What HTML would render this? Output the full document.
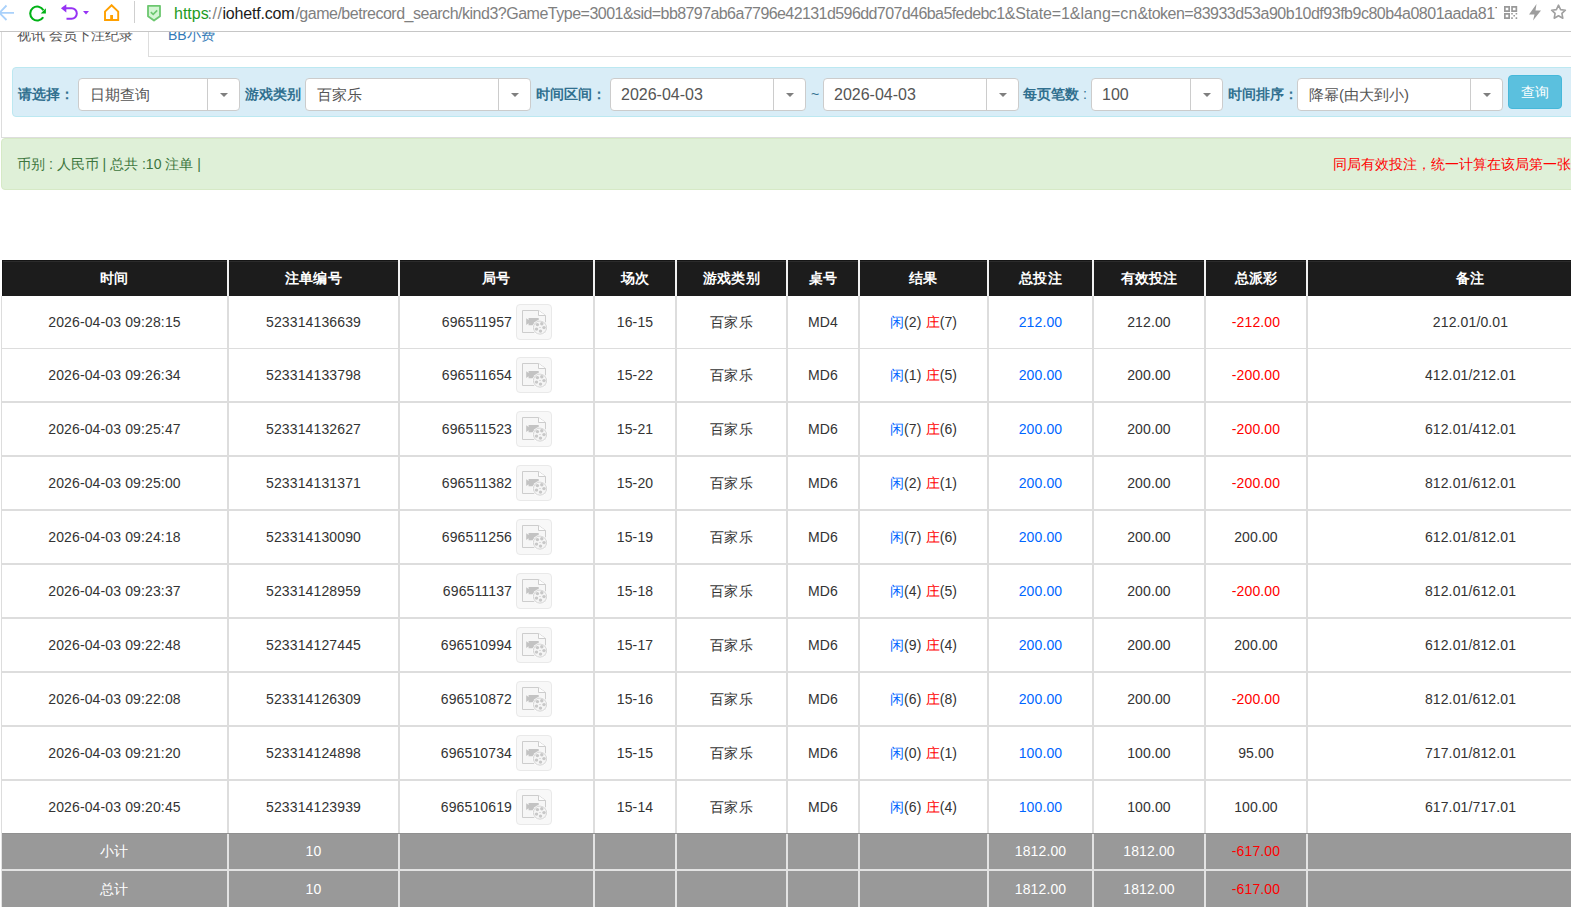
<!DOCTYPE html>
<html><head><meta charset="utf-8">
<style>
*{box-sizing:border-box;margin:0;padding:0}
html,body{width:1571px;height:907px;overflow:hidden;background:#fff;font-family:"Liberation Sans",sans-serif;color:#333}
.abs{position:absolute}
#tb{position:absolute;left:0;top:0;width:1571px;height:32px;background:#fff;border-bottom:1px solid #c6c6c6;z-index:5}
#url{position:absolute;left:174px;top:4px;height:22px;font-size:16px;line-height:20px;white-space:nowrap;color:#7f7f7f;width:1323px;overflow:hidden}
#url span{position:absolute;top:0}
.lbl{position:absolute;top:86px;font-size:14px;line-height:16px;font-weight:bold;color:#31708f;white-space:nowrap}
.sel{position:absolute;top:78px;height:33px;background:#fff;border:1px solid #ccc;border-radius:4px}
.sel .v{position:absolute;left:10px;top:6px;font-size:16px;line-height:19px;color:#555;white-space:nowrap}
.sel .v.cj{font-size:15px;left:11px}
.sel .sep{position:absolute;right:31px;top:0;bottom:0;border-left:1px solid #ccc}
.sel .car{position:absolute;right:11px;top:14px;width:0;height:0;border-left:4px solid transparent;border-right:4px solid transparent;border-top:4px solid #7f7f7f}
.c{position:absolute;text-align:center;font-size:14px;line-height:16px;white-space:nowrap;color:#333;letter-spacing:0.13px}
.th{color:#fff;font-weight:bold}
.tw{color:#fff}
.bl{color:#0066ff}
.rd{color:#ff0000}
.vl{position:absolute;width:2px;background:#ddd}
.hl{position:absolute;left:1px;width:1570px;background:#ddd}
.vidw{width:40px;height:40px}
.vidw svg{display:block}
</style></head><body>
<div id="tb">
 <!-- back -->
 <svg class="abs" style="left:0;top:4px" width="16" height="18" viewBox="0 0 16 18"><path d="M6.5 1.5L-0.6 8.8L6.5 16M-0.6 8.8H14" fill="none" stroke="#a9d1fb" stroke-width="1.8"/></svg>
 <!-- reload -->
 <svg class="abs" style="left:28px;top:5px" width="20" height="18" viewBox="0 0 20 18"><path d="M15.2 12.2A7 7 0 1 1 15.4 5.2" fill="none" stroke="#00b215" stroke-width="2.1"/><path d="M17.9 3.3V8.5H12.7z" fill="#00b215"/></svg>
 <!-- undo -->
 <svg class="abs" style="left:60px;top:3px" width="18" height="18" viewBox="0 0 18 18"><path d="M5.5 5.3H11.6A5.2 5.2 0 0 1 11.6 15.7H6.5" fill="none" stroke="#9632f4" stroke-width="2"/><path d="M0.9 5.3L6.3 1.2V9.6z" fill="#9632f4"/></svg>
 <svg class="abs" style="left:83px;top:11px" width="6" height="4" viewBox="0 0 6 4"><path d="M0 0H6L3 3.5z" fill="#9632f4"/></svg>
 <!-- home -->
 <svg class="abs" style="left:104px;top:4px" width="16" height="18" viewBox="0 0 16 18"><path d="M1 16V7.6L7.6 1.2L14.2 7.6V16H1z" fill="none" stroke="#ffa000" stroke-width="1.9"/><rect x="6.2" y="11" width="2.8" height="5" fill="#ffa000"/></svg>
 <div class="abs" style="left:134px;top:1px;width:1px;height:22px;background:#cfcfcf"></div>
 <!-- shield -->
 <svg class="abs" style="left:146px;top:4px" width="16" height="18" viewBox="0 0 16 18"><path d="M2 1.8H14V12.2L8 16.6L2 12.2z" fill="#d4f5d4" stroke="#6cc76f" stroke-width="1.8" stroke-linejoin="round"/><path d="M4.8 8.2L7.2 10.4L11.2 6.4" fill="none" stroke="#6cc76f" stroke-width="1.6"/></svg>
 <!-- qr -->
 <svg class="abs" style="left:1504px;top:6px" width="14" height="13" viewBox="0 0 14 13"><path d="M0 0h6v6H0zM1.7 1.7v2.6h2.6V1.7zM7.2 0h6v6h-6zM8.9 1.7v2.6h2.6V1.7zM0 7h6v6H0zM1.7 8.7v2.6h2.6V8.7z" fill="#999" fill-rule="evenodd"/><path d="M7.2 7h1.6v1.6H7.2zM11.6 7h1.6v1.6h-1.6zM9.4 9h1.6v1.6H9.4zM7.2 11.2h1.6V13H7.2zM11.6 11.2h1.6V13h-1.6z" fill="#999"/></svg>
 <!-- lightning -->
 <svg class="abs" style="left:1529px;top:4px" width="13" height="17" viewBox="0 0 13 17"><path d="M7.5 0L0 10.6H5.5L4 16.5L12 6.6H6.5z" fill="#9d9d9d"/></svg>
 <!-- star -->
 <svg class="abs" style="left:1550px;top:4px" width="17" height="16" viewBox="0 0 17 16"><path d="M8.5 1.2L10.6 5.6L15.4 6.2L11.9 9.4L12.8 14.2L8.5 11.8L4.2 14.2L5.1 9.4L1.6 6.2L6.4 5.6z" fill="none" stroke="#a0a0a0" stroke-width="1.6" stroke-linejoin="round"/></svg>
 <div id="url"><span style="left:0;color:#1e9b1e">https</span><span style="left:33.5px;letter-spacing:0.5px">://</span><span style="left:48.5px;color:#1a1a1a;letter-spacing:-0.2px">iohetf.com</span><span style="left:121.4px;letter-spacing:-0.49px">/game/betrecord_search/kind3?GameType=3001</span><span style="left:449px;letter-spacing:-0.58px">&amp;sid=bb8797ab6a7796e42131d596dd707d46ba5fedebc1</span><span style="left:830.8px;letter-spacing:-0.17px">&amp;State=1</span><span style="left:895.7px;letter-spacing:0.07px">&amp;lang=cn</span><span style="left:963.5px;letter-spacing:-0.49px">&amp;token=83933d53a90b10df93fb9c80b4a0801aada817</span></div>
</div>

<!-- tabs -->
<div class="abs" style="left:17px;top:27px;font-size:14px;line-height:16px;color:#555;white-space:nowrap">视讯 会员下注纪录</div>
<div class="abs" style="left:148px;top:20px;width:1430px;height:37px;border:1px solid #ddd;border-top:none"></div>
<div class="abs" style="left:168px;top:27px;font-size:14px;line-height:16px;color:#337ab7;white-space:nowrap">BB小费</div>
<div class="abs" style="left:1px;top:20px;width:1600px;height:118px;border:1px solid #ddd;border-top:none;border-right:none"></div>

<!-- filter bar -->
<div class="abs" style="left:12px;top:67px;width:1580px;height:50px;background:#d9edf7;border:1px solid #bce8f1;border-radius:4px"></div>
<div class="lbl" style="left:18px">请选择：</div>
<div class="sel" style="left:78px;width:162px"><div class="v cj">日期查询</div><div class="sep"></div><div class="car"></div></div>
<div class="lbl" style="left:245px">游戏类别</div>
<div class="sel" style="left:305px;width:226px"><div class="v cj">百家乐</div><div class="sep"></div><div class="car"></div></div>
<div class="lbl" style="left:536px">时间区间：</div>
<div class="sel" style="left:610px;width:196px"><div class="v">2026-04-03</div><div class="sep"></div><div class="car"></div></div>
<div class="abs" style="left:811px;top:86px;font-size:14px;line-height:16px;color:#31708f">~</div>
<div class="sel" style="left:823px;width:196px"><div class="v">2026-04-03</div><div class="sep"></div><div class="car"></div></div>
<div class="lbl" style="left:1023px">每页笔数<span style="font-weight:normal"> :</span></div>
<div class="sel" style="left:1091px;width:132px"><div class="v">100</div><div class="sep"></div><div class="car"></div></div>
<div class="lbl" style="left:1228px">时间排序：</div>
<div class="sel" style="left:1297px;width:206px"><div class="v cj">降幂(由大到小)</div><div class="sep"></div><div class="car"></div></div>
<div class="abs" style="left:1508px;top:75px;width:54px;height:34px;background:#5bc0de;border:1px solid #46b8da;border-radius:4px;color:#fff;font-size:14px;line-height:16px;text-align:center;padding-top:8px">查询</div>

<!-- alert -->
<div class="abs" style="left:1px;top:138px;width:1600px;height:52px;background:#dff0d8;border:1px solid #d6e9c6;border-radius:4px"></div>
<div class="abs" style="left:17px;top:156px;font-size:14px;line-height:16px;color:#3c763d;white-space:nowrap">币别 : 人民币 | 总共 :10 注单 |</div>
<div class="abs" style="left:1333px;top:156px;font-size:14px;line-height:16px;color:#ff0000;white-space:nowrap">同局有效投注，统一计算在该局第一张牌</div>
<div class="abs" style="left:2px;top:260px;width:1569px;height:36px;background:#1c1c1c;border-top:1px solid #151515;border-left:1px solid #151515"></div>
<div class="abs" style="left:3px;top:261px;width:1568px;height:1px;background:#2b2b2b"></div>
<div class="c th" style="left:2px;width:225px;top:270px">时间</div>
<div class="c th" style="left:229px;width:169px;top:270px">注单编号</div>
<div class="c th" style="left:400px;width:193px;top:270px">局号</div>
<div class="c th" style="left:595px;width:80px;top:270px">场次</div>
<div class="c th" style="left:677px;width:109px;top:270px">游戏类别</div>
<div class="c th" style="left:788px;width:70px;top:270px">桌号</div>
<div class="c th" style="left:860px;width:127px;top:270px">结果</div>
<div class="c th" style="left:989px;width:103px;top:270px">总投注</div>
<div class="c th" style="left:1094px;width:110px;top:270px">有效投注</div>
<div class="c th" style="left:1206px;width:100px;top:270px">总派彩</div>
<div class="c th" style="left:1308px;width:325px;top:270px">备注</div>
<div class="vl" style="left:227px;top:260px;height:36px;background:#f0f0f0"></div>
<div class="vl" style="left:398px;top:260px;height:36px;background:#f0f0f0"></div>
<div class="vl" style="left:593px;top:260px;height:36px;background:#f0f0f0"></div>
<div class="vl" style="left:675px;top:260px;height:36px;background:#f0f0f0"></div>
<div class="vl" style="left:786px;top:260px;height:36px;background:#f0f0f0"></div>
<div class="vl" style="left:858px;top:260px;height:36px;background:#f0f0f0"></div>
<div class="vl" style="left:987px;top:260px;height:36px;background:#f0f0f0"></div>
<div class="vl" style="left:1092px;top:260px;height:36px;background:#f0f0f0"></div>
<div class="vl" style="left:1204px;top:260px;height:36px;background:#f0f0f0"></div>
<div class="vl" style="left:1306px;top:260px;height:36px;background:#f0f0f0"></div>
<div class="abs" style="left:1px;top:296px;width:1px;height:537px;background:#ddd"></div>
<div class="vl" style="left:227px;top:296px;height:537px"></div>
<div class="vl" style="left:398px;top:296px;height:537px"></div>
<div class="vl" style="left:593px;top:296px;height:537px"></div>
<div class="vl" style="left:675px;top:296px;height:537px"></div>
<div class="vl" style="left:786px;top:296px;height:537px"></div>
<div class="vl" style="left:858px;top:296px;height:537px"></div>
<div class="vl" style="left:987px;top:296px;height:537px"></div>
<div class="vl" style="left:1092px;top:296px;height:537px"></div>
<div class="vl" style="left:1204px;top:296px;height:537px"></div>
<div class="vl" style="left:1306px;top:296px;height:537px"></div>
<div class="hl" style="top:348px;height:1px"></div>
<div class="hl" style="top:401px;height:2px"></div>
<div class="hl" style="top:455px;height:2px"></div>
<div class="hl" style="top:509px;height:2px"></div>
<div class="hl" style="top:563px;height:2px"></div>
<div class="hl" style="top:617px;height:2px"></div>
<div class="hl" style="top:671px;height:2px"></div>
<div class="hl" style="top:725px;height:2px"></div>
<div class="hl" style="top:779px;height:2px"></div>
<div class="c" style="left:2px;width:225px;top:314px">2026-04-03 09:28:15</div>
<div class="c" style="left:229px;width:169px;top:314px">523314136639</div>
<div class="c" style="left:400px;width:112px;top:314px;text-align:right">696511957</div>
<div class="abs vidw" style="left:514px;top:302px"><svg width="40" height="40" viewBox="0 0 40 40"><rect x="2.5" y="2.5" width="35" height="35" rx="3.5" fill="#f8f8f8" stroke="#e9e9e9"/><path d="M8.5 8.5H24.5L31.5 13.5V30.5H8.5z" fill="#f6f6f6" stroke="#cdcdcd"/><path d="M24.5 8.5V13.5H31.5" fill="#fdfdfd" stroke="#cdcdcd"/><path d="M12.2 16.2L14.6 18V15.9H24.7V23.2H14.6V21.2L12.2 23z" fill="#c3c3c3"/><circle cx="26" cy="25.6" r="7.6" fill="#fff"/><circle cx="26" cy="25.6" r="6.6" fill="#f5f5f5" stroke="#cfcfcf" stroke-width="0.9"/><circle cx="23.4" cy="22.6" r="1.7" fill="#c8c8c8"/><circle cx="27.8" cy="21.7" r="1.7" fill="#c8c8c8"/><circle cx="30" cy="25.6" r="1.7" fill="#c8c8c8"/><circle cx="26.5" cy="29.1" r="1.7" fill="#c8c8c8"/><circle cx="22.5" cy="27.1" r="1.7" fill="#c8c8c8"/><rect x="25.3" y="25" width="1.4" height="0.9" fill="#cfcfcf"/></svg></div>
<div class="c" style="left:595px;width:80px;top:314px">16-15</div>
<div class="c" style="left:677px;width:109px;top:314px">百家乐</div>
<div class="c" style="left:788px;width:70px;top:314px">MD4</div>
<div class="c" style="left:860px;width:127px;top:314px"><span class="bl">闲</span>(2) <span class="rd">庄</span>(7)</div>
<div class="c" style="left:989px;width:103px;top:314px"><span class="bl">212.00</span></div>
<div class="c" style="left:1094px;width:110px;top:314px">212.00</div>
<div class="c" style="left:1206px;width:100px;top:314px"><span class="rd">-212.00</span></div>
<div class="c" style="left:1308px;width:325px;top:314px">212.01/0.01</div>
<div class="c" style="left:2px;width:225px;top:367px">2026-04-03 09:26:34</div>
<div class="c" style="left:229px;width:169px;top:367px">523314133798</div>
<div class="c" style="left:400px;width:112px;top:367px;text-align:right">696511654</div>
<div class="abs vidw" style="left:514px;top:355px"><svg width="40" height="40" viewBox="0 0 40 40"><rect x="2.5" y="2.5" width="35" height="35" rx="3.5" fill="#f8f8f8" stroke="#e9e9e9"/><path d="M8.5 8.5H24.5L31.5 13.5V30.5H8.5z" fill="#f6f6f6" stroke="#cdcdcd"/><path d="M24.5 8.5V13.5H31.5" fill="#fdfdfd" stroke="#cdcdcd"/><path d="M12.2 16.2L14.6 18V15.9H24.7V23.2H14.6V21.2L12.2 23z" fill="#c3c3c3"/><circle cx="26" cy="25.6" r="7.6" fill="#fff"/><circle cx="26" cy="25.6" r="6.6" fill="#f5f5f5" stroke="#cfcfcf" stroke-width="0.9"/><circle cx="23.4" cy="22.6" r="1.7" fill="#c8c8c8"/><circle cx="27.8" cy="21.7" r="1.7" fill="#c8c8c8"/><circle cx="30" cy="25.6" r="1.7" fill="#c8c8c8"/><circle cx="26.5" cy="29.1" r="1.7" fill="#c8c8c8"/><circle cx="22.5" cy="27.1" r="1.7" fill="#c8c8c8"/><rect x="25.3" y="25" width="1.4" height="0.9" fill="#cfcfcf"/></svg></div>
<div class="c" style="left:595px;width:80px;top:367px">15-22</div>
<div class="c" style="left:677px;width:109px;top:367px">百家乐</div>
<div class="c" style="left:788px;width:70px;top:367px">MD6</div>
<div class="c" style="left:860px;width:127px;top:367px"><span class="bl">闲</span>(1) <span class="rd">庄</span>(5)</div>
<div class="c" style="left:989px;width:103px;top:367px"><span class="bl">200.00</span></div>
<div class="c" style="left:1094px;width:110px;top:367px">200.00</div>
<div class="c" style="left:1206px;width:100px;top:367px"><span class="rd">-200.00</span></div>
<div class="c" style="left:1308px;width:325px;top:367px">412.01/212.01</div>
<div class="c" style="left:2px;width:225px;top:421px">2026-04-03 09:25:47</div>
<div class="c" style="left:229px;width:169px;top:421px">523314132627</div>
<div class="c" style="left:400px;width:112px;top:421px;text-align:right">696511523</div>
<div class="abs vidw" style="left:514px;top:409px"><svg width="40" height="40" viewBox="0 0 40 40"><rect x="2.5" y="2.5" width="35" height="35" rx="3.5" fill="#f8f8f8" stroke="#e9e9e9"/><path d="M8.5 8.5H24.5L31.5 13.5V30.5H8.5z" fill="#f6f6f6" stroke="#cdcdcd"/><path d="M24.5 8.5V13.5H31.5" fill="#fdfdfd" stroke="#cdcdcd"/><path d="M12.2 16.2L14.6 18V15.9H24.7V23.2H14.6V21.2L12.2 23z" fill="#c3c3c3"/><circle cx="26" cy="25.6" r="7.6" fill="#fff"/><circle cx="26" cy="25.6" r="6.6" fill="#f5f5f5" stroke="#cfcfcf" stroke-width="0.9"/><circle cx="23.4" cy="22.6" r="1.7" fill="#c8c8c8"/><circle cx="27.8" cy="21.7" r="1.7" fill="#c8c8c8"/><circle cx="30" cy="25.6" r="1.7" fill="#c8c8c8"/><circle cx="26.5" cy="29.1" r="1.7" fill="#c8c8c8"/><circle cx="22.5" cy="27.1" r="1.7" fill="#c8c8c8"/><rect x="25.3" y="25" width="1.4" height="0.9" fill="#cfcfcf"/></svg></div>
<div class="c" style="left:595px;width:80px;top:421px">15-21</div>
<div class="c" style="left:677px;width:109px;top:421px">百家乐</div>
<div class="c" style="left:788px;width:70px;top:421px">MD6</div>
<div class="c" style="left:860px;width:127px;top:421px"><span class="bl">闲</span>(7) <span class="rd">庄</span>(6)</div>
<div class="c" style="left:989px;width:103px;top:421px"><span class="bl">200.00</span></div>
<div class="c" style="left:1094px;width:110px;top:421px">200.00</div>
<div class="c" style="left:1206px;width:100px;top:421px"><span class="rd">-200.00</span></div>
<div class="c" style="left:1308px;width:325px;top:421px">612.01/412.01</div>
<div class="c" style="left:2px;width:225px;top:475px">2026-04-03 09:25:00</div>
<div class="c" style="left:229px;width:169px;top:475px">523314131371</div>
<div class="c" style="left:400px;width:112px;top:475px;text-align:right">696511382</div>
<div class="abs vidw" style="left:514px;top:463px"><svg width="40" height="40" viewBox="0 0 40 40"><rect x="2.5" y="2.5" width="35" height="35" rx="3.5" fill="#f8f8f8" stroke="#e9e9e9"/><path d="M8.5 8.5H24.5L31.5 13.5V30.5H8.5z" fill="#f6f6f6" stroke="#cdcdcd"/><path d="M24.5 8.5V13.5H31.5" fill="#fdfdfd" stroke="#cdcdcd"/><path d="M12.2 16.2L14.6 18V15.9H24.7V23.2H14.6V21.2L12.2 23z" fill="#c3c3c3"/><circle cx="26" cy="25.6" r="7.6" fill="#fff"/><circle cx="26" cy="25.6" r="6.6" fill="#f5f5f5" stroke="#cfcfcf" stroke-width="0.9"/><circle cx="23.4" cy="22.6" r="1.7" fill="#c8c8c8"/><circle cx="27.8" cy="21.7" r="1.7" fill="#c8c8c8"/><circle cx="30" cy="25.6" r="1.7" fill="#c8c8c8"/><circle cx="26.5" cy="29.1" r="1.7" fill="#c8c8c8"/><circle cx="22.5" cy="27.1" r="1.7" fill="#c8c8c8"/><rect x="25.3" y="25" width="1.4" height="0.9" fill="#cfcfcf"/></svg></div>
<div class="c" style="left:595px;width:80px;top:475px">15-20</div>
<div class="c" style="left:677px;width:109px;top:475px">百家乐</div>
<div class="c" style="left:788px;width:70px;top:475px">MD6</div>
<div class="c" style="left:860px;width:127px;top:475px"><span class="bl">闲</span>(2) <span class="rd">庄</span>(1)</div>
<div class="c" style="left:989px;width:103px;top:475px"><span class="bl">200.00</span></div>
<div class="c" style="left:1094px;width:110px;top:475px">200.00</div>
<div class="c" style="left:1206px;width:100px;top:475px"><span class="rd">-200.00</span></div>
<div class="c" style="left:1308px;width:325px;top:475px">812.01/612.01</div>
<div class="c" style="left:2px;width:225px;top:529px">2026-04-03 09:24:18</div>
<div class="c" style="left:229px;width:169px;top:529px">523314130090</div>
<div class="c" style="left:400px;width:112px;top:529px;text-align:right">696511256</div>
<div class="abs vidw" style="left:514px;top:517px"><svg width="40" height="40" viewBox="0 0 40 40"><rect x="2.5" y="2.5" width="35" height="35" rx="3.5" fill="#f8f8f8" stroke="#e9e9e9"/><path d="M8.5 8.5H24.5L31.5 13.5V30.5H8.5z" fill="#f6f6f6" stroke="#cdcdcd"/><path d="M24.5 8.5V13.5H31.5" fill="#fdfdfd" stroke="#cdcdcd"/><path d="M12.2 16.2L14.6 18V15.9H24.7V23.2H14.6V21.2L12.2 23z" fill="#c3c3c3"/><circle cx="26" cy="25.6" r="7.6" fill="#fff"/><circle cx="26" cy="25.6" r="6.6" fill="#f5f5f5" stroke="#cfcfcf" stroke-width="0.9"/><circle cx="23.4" cy="22.6" r="1.7" fill="#c8c8c8"/><circle cx="27.8" cy="21.7" r="1.7" fill="#c8c8c8"/><circle cx="30" cy="25.6" r="1.7" fill="#c8c8c8"/><circle cx="26.5" cy="29.1" r="1.7" fill="#c8c8c8"/><circle cx="22.5" cy="27.1" r="1.7" fill="#c8c8c8"/><rect x="25.3" y="25" width="1.4" height="0.9" fill="#cfcfcf"/></svg></div>
<div class="c" style="left:595px;width:80px;top:529px">15-19</div>
<div class="c" style="left:677px;width:109px;top:529px">百家乐</div>
<div class="c" style="left:788px;width:70px;top:529px">MD6</div>
<div class="c" style="left:860px;width:127px;top:529px"><span class="bl">闲</span>(7) <span class="rd">庄</span>(6)</div>
<div class="c" style="left:989px;width:103px;top:529px"><span class="bl">200.00</span></div>
<div class="c" style="left:1094px;width:110px;top:529px">200.00</div>
<div class="c" style="left:1206px;width:100px;top:529px">200.00</div>
<div class="c" style="left:1308px;width:325px;top:529px">612.01/812.01</div>
<div class="c" style="left:2px;width:225px;top:583px">2026-04-03 09:23:37</div>
<div class="c" style="left:229px;width:169px;top:583px">523314128959</div>
<div class="c" style="left:400px;width:112px;top:583px;text-align:right">696511137</div>
<div class="abs vidw" style="left:514px;top:571px"><svg width="40" height="40" viewBox="0 0 40 40"><rect x="2.5" y="2.5" width="35" height="35" rx="3.5" fill="#f8f8f8" stroke="#e9e9e9"/><path d="M8.5 8.5H24.5L31.5 13.5V30.5H8.5z" fill="#f6f6f6" stroke="#cdcdcd"/><path d="M24.5 8.5V13.5H31.5" fill="#fdfdfd" stroke="#cdcdcd"/><path d="M12.2 16.2L14.6 18V15.9H24.7V23.2H14.6V21.2L12.2 23z" fill="#c3c3c3"/><circle cx="26" cy="25.6" r="7.6" fill="#fff"/><circle cx="26" cy="25.6" r="6.6" fill="#f5f5f5" stroke="#cfcfcf" stroke-width="0.9"/><circle cx="23.4" cy="22.6" r="1.7" fill="#c8c8c8"/><circle cx="27.8" cy="21.7" r="1.7" fill="#c8c8c8"/><circle cx="30" cy="25.6" r="1.7" fill="#c8c8c8"/><circle cx="26.5" cy="29.1" r="1.7" fill="#c8c8c8"/><circle cx="22.5" cy="27.1" r="1.7" fill="#c8c8c8"/><rect x="25.3" y="25" width="1.4" height="0.9" fill="#cfcfcf"/></svg></div>
<div class="c" style="left:595px;width:80px;top:583px">15-18</div>
<div class="c" style="left:677px;width:109px;top:583px">百家乐</div>
<div class="c" style="left:788px;width:70px;top:583px">MD6</div>
<div class="c" style="left:860px;width:127px;top:583px"><span class="bl">闲</span>(4) <span class="rd">庄</span>(5)</div>
<div class="c" style="left:989px;width:103px;top:583px"><span class="bl">200.00</span></div>
<div class="c" style="left:1094px;width:110px;top:583px">200.00</div>
<div class="c" style="left:1206px;width:100px;top:583px"><span class="rd">-200.00</span></div>
<div class="c" style="left:1308px;width:325px;top:583px">812.01/612.01</div>
<div class="c" style="left:2px;width:225px;top:637px">2026-04-03 09:22:48</div>
<div class="c" style="left:229px;width:169px;top:637px">523314127445</div>
<div class="c" style="left:400px;width:112px;top:637px;text-align:right">696510994</div>
<div class="abs vidw" style="left:514px;top:625px"><svg width="40" height="40" viewBox="0 0 40 40"><rect x="2.5" y="2.5" width="35" height="35" rx="3.5" fill="#f8f8f8" stroke="#e9e9e9"/><path d="M8.5 8.5H24.5L31.5 13.5V30.5H8.5z" fill="#f6f6f6" stroke="#cdcdcd"/><path d="M24.5 8.5V13.5H31.5" fill="#fdfdfd" stroke="#cdcdcd"/><path d="M12.2 16.2L14.6 18V15.9H24.7V23.2H14.6V21.2L12.2 23z" fill="#c3c3c3"/><circle cx="26" cy="25.6" r="7.6" fill="#fff"/><circle cx="26" cy="25.6" r="6.6" fill="#f5f5f5" stroke="#cfcfcf" stroke-width="0.9"/><circle cx="23.4" cy="22.6" r="1.7" fill="#c8c8c8"/><circle cx="27.8" cy="21.7" r="1.7" fill="#c8c8c8"/><circle cx="30" cy="25.6" r="1.7" fill="#c8c8c8"/><circle cx="26.5" cy="29.1" r="1.7" fill="#c8c8c8"/><circle cx="22.5" cy="27.1" r="1.7" fill="#c8c8c8"/><rect x="25.3" y="25" width="1.4" height="0.9" fill="#cfcfcf"/></svg></div>
<div class="c" style="left:595px;width:80px;top:637px">15-17</div>
<div class="c" style="left:677px;width:109px;top:637px">百家乐</div>
<div class="c" style="left:788px;width:70px;top:637px">MD6</div>
<div class="c" style="left:860px;width:127px;top:637px"><span class="bl">闲</span>(9) <span class="rd">庄</span>(4)</div>
<div class="c" style="left:989px;width:103px;top:637px"><span class="bl">200.00</span></div>
<div class="c" style="left:1094px;width:110px;top:637px">200.00</div>
<div class="c" style="left:1206px;width:100px;top:637px">200.00</div>
<div class="c" style="left:1308px;width:325px;top:637px">612.01/812.01</div>
<div class="c" style="left:2px;width:225px;top:691px">2026-04-03 09:22:08</div>
<div class="c" style="left:229px;width:169px;top:691px">523314126309</div>
<div class="c" style="left:400px;width:112px;top:691px;text-align:right">696510872</div>
<div class="abs vidw" style="left:514px;top:679px"><svg width="40" height="40" viewBox="0 0 40 40"><rect x="2.5" y="2.5" width="35" height="35" rx="3.5" fill="#f8f8f8" stroke="#e9e9e9"/><path d="M8.5 8.5H24.5L31.5 13.5V30.5H8.5z" fill="#f6f6f6" stroke="#cdcdcd"/><path d="M24.5 8.5V13.5H31.5" fill="#fdfdfd" stroke="#cdcdcd"/><path d="M12.2 16.2L14.6 18V15.9H24.7V23.2H14.6V21.2L12.2 23z" fill="#c3c3c3"/><circle cx="26" cy="25.6" r="7.6" fill="#fff"/><circle cx="26" cy="25.6" r="6.6" fill="#f5f5f5" stroke="#cfcfcf" stroke-width="0.9"/><circle cx="23.4" cy="22.6" r="1.7" fill="#c8c8c8"/><circle cx="27.8" cy="21.7" r="1.7" fill="#c8c8c8"/><circle cx="30" cy="25.6" r="1.7" fill="#c8c8c8"/><circle cx="26.5" cy="29.1" r="1.7" fill="#c8c8c8"/><circle cx="22.5" cy="27.1" r="1.7" fill="#c8c8c8"/><rect x="25.3" y="25" width="1.4" height="0.9" fill="#cfcfcf"/></svg></div>
<div class="c" style="left:595px;width:80px;top:691px">15-16</div>
<div class="c" style="left:677px;width:109px;top:691px">百家乐</div>
<div class="c" style="left:788px;width:70px;top:691px">MD6</div>
<div class="c" style="left:860px;width:127px;top:691px"><span class="bl">闲</span>(6) <span class="rd">庄</span>(8)</div>
<div class="c" style="left:989px;width:103px;top:691px"><span class="bl">200.00</span></div>
<div class="c" style="left:1094px;width:110px;top:691px">200.00</div>
<div class="c" style="left:1206px;width:100px;top:691px"><span class="rd">-200.00</span></div>
<div class="c" style="left:1308px;width:325px;top:691px">812.01/612.01</div>
<div class="c" style="left:2px;width:225px;top:745px">2026-04-03 09:21:20</div>
<div class="c" style="left:229px;width:169px;top:745px">523314124898</div>
<div class="c" style="left:400px;width:112px;top:745px;text-align:right">696510734</div>
<div class="abs vidw" style="left:514px;top:733px"><svg width="40" height="40" viewBox="0 0 40 40"><rect x="2.5" y="2.5" width="35" height="35" rx="3.5" fill="#f8f8f8" stroke="#e9e9e9"/><path d="M8.5 8.5H24.5L31.5 13.5V30.5H8.5z" fill="#f6f6f6" stroke="#cdcdcd"/><path d="M24.5 8.5V13.5H31.5" fill="#fdfdfd" stroke="#cdcdcd"/><path d="M12.2 16.2L14.6 18V15.9H24.7V23.2H14.6V21.2L12.2 23z" fill="#c3c3c3"/><circle cx="26" cy="25.6" r="7.6" fill="#fff"/><circle cx="26" cy="25.6" r="6.6" fill="#f5f5f5" stroke="#cfcfcf" stroke-width="0.9"/><circle cx="23.4" cy="22.6" r="1.7" fill="#c8c8c8"/><circle cx="27.8" cy="21.7" r="1.7" fill="#c8c8c8"/><circle cx="30" cy="25.6" r="1.7" fill="#c8c8c8"/><circle cx="26.5" cy="29.1" r="1.7" fill="#c8c8c8"/><circle cx="22.5" cy="27.1" r="1.7" fill="#c8c8c8"/><rect x="25.3" y="25" width="1.4" height="0.9" fill="#cfcfcf"/></svg></div>
<div class="c" style="left:595px;width:80px;top:745px">15-15</div>
<div class="c" style="left:677px;width:109px;top:745px">百家乐</div>
<div class="c" style="left:788px;width:70px;top:745px">MD6</div>
<div class="c" style="left:860px;width:127px;top:745px"><span class="bl">闲</span>(0) <span class="rd">庄</span>(1)</div>
<div class="c" style="left:989px;width:103px;top:745px"><span class="bl">100.00</span></div>
<div class="c" style="left:1094px;width:110px;top:745px">100.00</div>
<div class="c" style="left:1206px;width:100px;top:745px">95.00</div>
<div class="c" style="left:1308px;width:325px;top:745px">717.01/812.01</div>
<div class="c" style="left:2px;width:225px;top:799px">2026-04-03 09:20:45</div>
<div class="c" style="left:229px;width:169px;top:799px">523314123939</div>
<div class="c" style="left:400px;width:112px;top:799px;text-align:right">696510619</div>
<div class="abs vidw" style="left:514px;top:787px"><svg width="40" height="40" viewBox="0 0 40 40"><rect x="2.5" y="2.5" width="35" height="35" rx="3.5" fill="#f8f8f8" stroke="#e9e9e9"/><path d="M8.5 8.5H24.5L31.5 13.5V30.5H8.5z" fill="#f6f6f6" stroke="#cdcdcd"/><path d="M24.5 8.5V13.5H31.5" fill="#fdfdfd" stroke="#cdcdcd"/><path d="M12.2 16.2L14.6 18V15.9H24.7V23.2H14.6V21.2L12.2 23z" fill="#c3c3c3"/><circle cx="26" cy="25.6" r="7.6" fill="#fff"/><circle cx="26" cy="25.6" r="6.6" fill="#f5f5f5" stroke="#cfcfcf" stroke-width="0.9"/><circle cx="23.4" cy="22.6" r="1.7" fill="#c8c8c8"/><circle cx="27.8" cy="21.7" r="1.7" fill="#c8c8c8"/><circle cx="30" cy="25.6" r="1.7" fill="#c8c8c8"/><circle cx="26.5" cy="29.1" r="1.7" fill="#c8c8c8"/><circle cx="22.5" cy="27.1" r="1.7" fill="#c8c8c8"/><rect x="25.3" y="25" width="1.4" height="0.9" fill="#cfcfcf"/></svg></div>
<div class="c" style="left:595px;width:80px;top:799px">15-14</div>
<div class="c" style="left:677px;width:109px;top:799px">百家乐</div>
<div class="c" style="left:788px;width:70px;top:799px">MD6</div>
<div class="c" style="left:860px;width:127px;top:799px"><span class="bl">闲</span>(6) <span class="rd">庄</span>(4)</div>
<div class="c" style="left:989px;width:103px;top:799px"><span class="bl">100.00</span></div>
<div class="c" style="left:1094px;width:110px;top:799px">100.00</div>
<div class="c" style="left:1206px;width:100px;top:799px">100.00</div>
<div class="c" style="left:1308px;width:325px;top:799px">617.01/717.01</div>
<div class="abs" style="left:2px;top:833px;width:1569px;height:36px;background:#999"></div>
<div class="c tw" style="left:2px;width:225px;top:843px">小计</div>
<div class="c tw" style="left:229px;width:169px;top:843px">10</div>
<div class="c tw" style="left:989px;width:103px;top:843px">1812.00</div>
<div class="c tw" style="left:1094px;width:110px;top:843px">1812.00</div>
<div class="c tw" style="left:1206px;width:100px;top:843px"><span class="rd">-617.00</span></div>
<div class="vl" style="left:227px;top:833px;height:36px;background:#e3e3e3"></div>
<div class="vl" style="left:398px;top:833px;height:36px;background:#e3e3e3"></div>
<div class="vl" style="left:593px;top:833px;height:36px;background:#e3e3e3"></div>
<div class="vl" style="left:675px;top:833px;height:36px;background:#e3e3e3"></div>
<div class="vl" style="left:786px;top:833px;height:36px;background:#e3e3e3"></div>
<div class="vl" style="left:858px;top:833px;height:36px;background:#e3e3e3"></div>
<div class="vl" style="left:987px;top:833px;height:36px;background:#e3e3e3"></div>
<div class="vl" style="left:1092px;top:833px;height:36px;background:#e3e3e3"></div>
<div class="vl" style="left:1204px;top:833px;height:36px;background:#e3e3e3"></div>
<div class="vl" style="left:1306px;top:833px;height:36px;background:#e3e3e3"></div>
<div class="abs" style="left:2px;top:871px;width:1569px;height:36px;background:#999"></div>
<div class="c tw" style="left:2px;width:225px;top:881px">总计</div>
<div class="c tw" style="left:229px;width:169px;top:881px">10</div>
<div class="c tw" style="left:989px;width:103px;top:881px">1812.00</div>
<div class="c tw" style="left:1094px;width:110px;top:881px">1812.00</div>
<div class="c tw" style="left:1206px;width:100px;top:881px"><span class="rd">-617.00</span></div>
<div class="vl" style="left:227px;top:871px;height:36px;background:#e3e3e3"></div>
<div class="vl" style="left:398px;top:871px;height:36px;background:#e3e3e3"></div>
<div class="vl" style="left:593px;top:871px;height:36px;background:#e3e3e3"></div>
<div class="vl" style="left:675px;top:871px;height:36px;background:#e3e3e3"></div>
<div class="vl" style="left:786px;top:871px;height:36px;background:#e3e3e3"></div>
<div class="vl" style="left:858px;top:871px;height:36px;background:#e3e3e3"></div>
<div class="vl" style="left:987px;top:871px;height:36px;background:#e3e3e3"></div>
<div class="vl" style="left:1092px;top:871px;height:36px;background:#e3e3e3"></div>
<div class="vl" style="left:1204px;top:871px;height:36px;background:#e3e3e3"></div>
<div class="vl" style="left:1306px;top:871px;height:36px;background:#e3e3e3"></div>
<div class="hl" style="top:869px;height:2px;background:#e3e3e3"></div>
<div class="abs" style="left:1px;top:833px;width:1px;height:74px;background:#e3e3e3"></div>
<div class="abs" style="left:2px;top:833px;width:1569px;height:1px;background:#909090"></div></body></html>
